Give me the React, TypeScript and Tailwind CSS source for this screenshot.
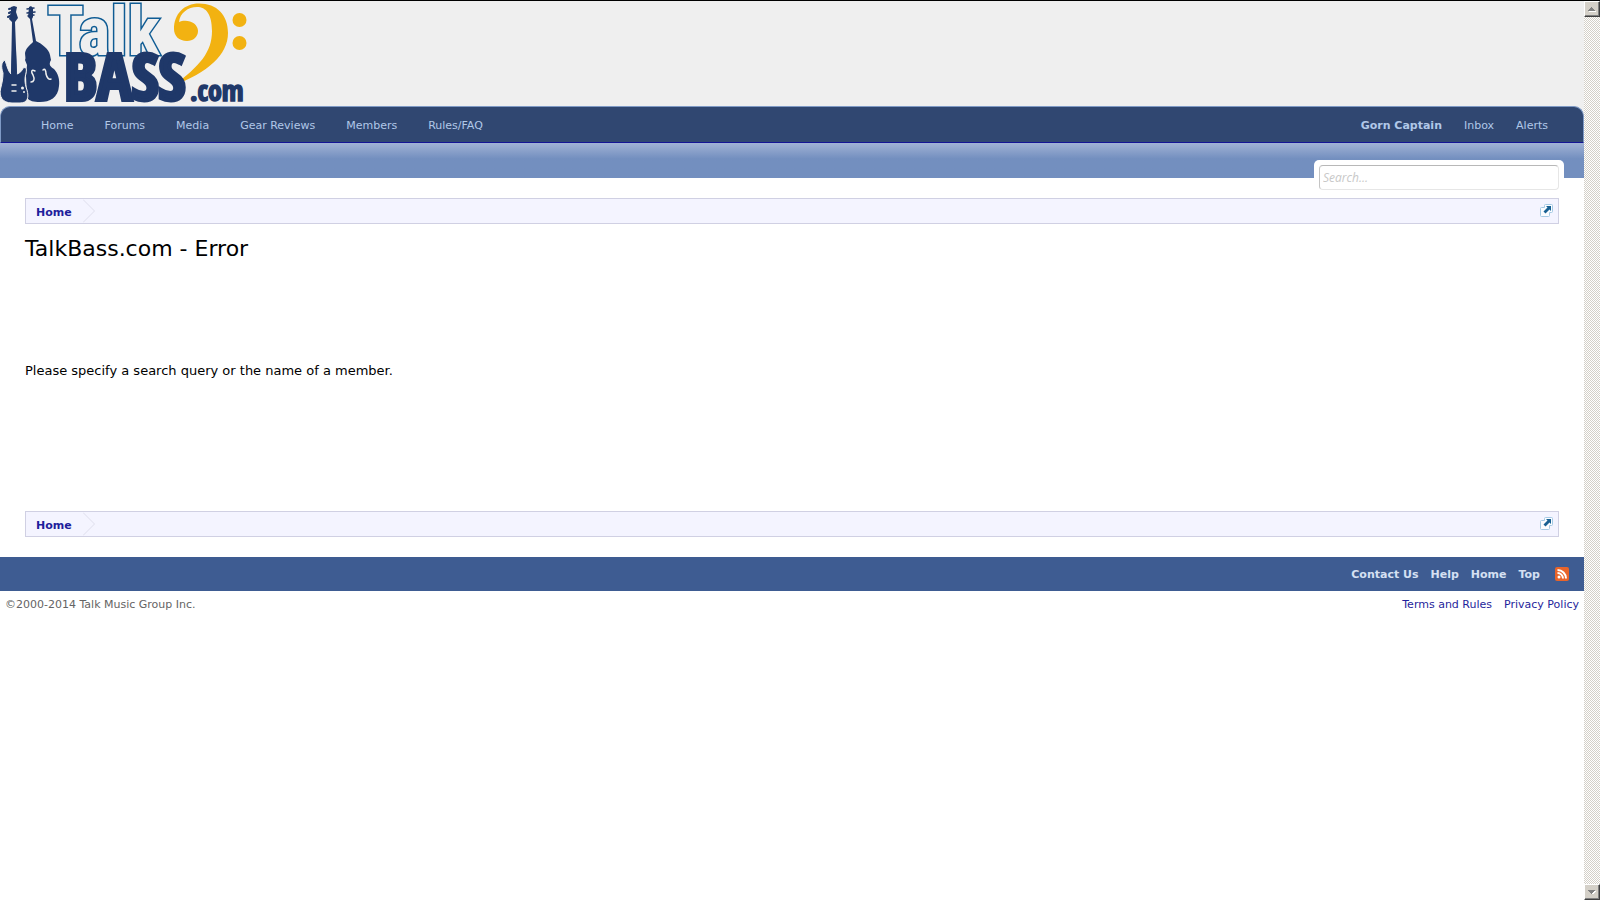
const navLinks = ["Home", "Forums", "Media", "Gear Reviews", "Members", "Rules/FAQ"];
const footerLinks = ["Contact Us", "Help", "Home", "Top"];

function Logo() {
	return (
		<svg
			width="252"
			height="105"
			viewBox="0 0 252 105"
			role="img"
			aria-label="TalkBass.com"
			className="block overflow-visible"
		>
			{/* bass clef */}
			<g fill="#f2b211">
				<path d="M174 28 C174 13 184 2.500 199 2.500 C217 2.500 228 14 228 32 C228 54 208 71 173 85 C200 65 212 51 212 30 C212 13 206 6 197 6 C188 6 180 12 179 21 C182 19.500 187 19.500 190 20.500 C195 22 198 26 198 30 C198 36 193 40 187 40 C179 40 174 35 174 28Z" />
				<circle cx="239.500" cy="19" r="7" />
				<circle cx="239.500" cy="42" r="7" />
			</g>
			<text
				x="47"
				y="54"
				fontSize="68"
				fontWeight="700"
				fill="#efefef"
				stroke="#0f5c94"
				strokeWidth="3"
				paintOrder="stroke"
				className="font-['Roboto_Condensed','Open_Sans_Condensed',sans-serif]"
			>
				Talk
			</text>
			<text
				x="64"
				y="99"
				fontSize="65"
				fontWeight="700"
				fill="#1f3869"
				stroke="#1f3869"
				strokeWidth="4"
				className="font-['Open_Sans_Condensed','Roboto_Condensed',sans-serif]"
			>
				BASS
			</text>
			<text
				x="190"
				y="100"
				fontSize="28"
				fontWeight="700"
				fill="#1f3869"
				stroke="#1f3869"
				strokeWidth="1.500"
				className="font-['Open_Sans_Condensed','Roboto_Condensed',sans-serif]"
			>
				.com
			</text>
			{/* upright bass */}
			<g fill="#1f3869">
				<path d="M29 6 L31 5 L33 7 L33 16 L32 18 L36 40 C42 43 49 48 50 54 L51 59 C48 64 51 66 54 68 C58 72 60 79 59 85 C58 97 50 101 40 101 C33 101 30 100 27 97 L26 75 L27 64 L25 59 C26 57 25 55 25 52 C26 47 30 44 33 41 L30 18 L28 16Z" />
				<path
					d="M27 8 L34 7 M27 12 L35 11 M28 15 L34 14"
					stroke="#1f3869"
					strokeWidth="1.500"
					strokeLinecap="round"
				/>
			</g>
			{/* electric bass */}
			<g fill="#1f3869">
				<path d="M11 6 L14 5 L17 6 L16 11 L18 17 L15 21 L17 73 L11 73 L12 21 L9 18 L11 11Z" />
				<path
					d="M9 8 L13 7 M9 12 L13 10 M8 16 L12 14"
					stroke="#1f3869"
					strokeWidth="2"
					strokeLinecap="round"
				/>
				<path
					d="M5 59 C1 61 1 66 3 72 C3 78 2 82 0.500 88 C-1 95 2 102 12 102 L20 102 C28 102 29 96 27 89 C24 81 25 76 26 72 C27 67 26 66 23 67 C22 70 20 72 17 73 L11 73 C8 70 7 65 5 59Z"
					stroke="#efefef"
					strokeWidth="1"
				/>
				<path d="M12 50 H16 L17 76 H11Z" />
			</g>
			<g fill="none" stroke="#efefef" strokeWidth="1.500" strokeLinecap="round">
				<path d="M12 84 H16 M12 90 H16" />
				<path d="M35 70 C31 68 31 71 33 74 C35 78 34 81 31 81" />
				<path d="M43 69 C45 67 46 70 46 73 C47 77 49 79 51 78" />
			</g>
			<g fill="#efefef">
				<circle cx="22.500" cy="87" r="1.500" />
				<circle cx="24" cy="91" r="1" />
			</g>
		</svg>
	);
}

function OpenQuickNav() {
	return (
		<button type="button" aria-label="Open quick navigation" className="mr-1">
			<svg width="14" height="14" viewBox="0 0 14 14" className="block">
				<path
					d="M5.500 0.500 H11.500 Q12.500 0.500 12.500 1.500 V7.500 Q12.500 8.500 11.500 8.500 H9.500 V11.500 Q9.500 12.500 8.500 12.500 H1.500 Q0.500 12.500 0.500 11.500 V4.500 Q0.500 3.500 1.500 3.500 H4.500 V1.500 Q4.500 0.500 5.500 0.500Z"
					fill="#fafcff"
					stroke="#a5cae4"
				/>
				<path d="M6 2 H11 V7 L9.500 5.500 L5.500 9.500 L3.500 7.500 L7.500 3.500Z" fill="#176093" />
			</svg>
		</button>
	);
}

function Breadcrumb() {
	return (
		<nav
			aria-label="Breadcrumb"
			className="flex h-[26px] items-center justify-between border border-[#d0d0e3] bg-[#f4f4ff]"
		>
			<div className="flex h-full items-center">
				<a href="#home" className="pl-2.5 pt-1 text-[11px] leading-4 font-bold text-[#1f1f9c]">
					Home
				</a>
				<svg width="13" height="24" viewBox="0 0 13 24" className="ml-[11px]" aria-hidden="true">
					<path d="M0 0.500 L11.500 12 L0 23.500" fill="none" stroke="#dedeec" />
				</svg>
			</div>
			<OpenQuickNav />
		</nav>
	);
}

function ScrollRail() {
	const button =
		"flex h-4 w-4 items-center justify-center border border-t-white border-l-white border-r-[#404040] border-b-[#404040] bg-[#d4d0c8] shadow-[inset_-1px_-1px_0_#808080]";

	return (
		<div className="sticky top-0 flex h-screen w-4 shrink-0 flex-col justify-between border-t border-black bg-white bg-[repeating-conic-gradient(#d4d0c8_0_25%,#ffffff_0_50%)] bg-[length:2px_2px]">
			<button type="button" aria-label="Scroll up" className={button}>
				<svg width="8" height="6" viewBox="0 0 8 6" shapeRendering="crispEdges">
					<path d="M1 5 H8 V6 H1Z" fill="#ffffff" />
					<path d="M3 1 H4 V2 H5 V3 H6 V4 H7 V5 H0 V4 H1 V3 H2 V2 H3Z" fill="#808080" />
				</svg>
			</button>
			<button type="button" aria-label="Scroll down" className={button}>
				<svg width="8" height="6" viewBox="0 0 8 6" shapeRendering="crispEdges">
					<path d="M8 2 V3 H7 V4 H6 V5 H4 V4 H5 V3 H6 V2Z" fill="#ffffff" />
					<path d="M0 1 H7 V2 H6 V3 H5 V4 H4 V5 H3 V4 H2 V3 H1 V2 H0Z" fill="#808080" />
				</svg>
			</button>
		</div>
	);
}

export default function App() {
	return (
		<div className="flex min-h-screen bg-white font-[Verdana,'DejaVu_Sans',sans-serif] text-[#000000]">
			<div className="min-w-0 flex-1">
				<header>
					<div className="border-t border-black bg-[#efefef]">
						<a href="#home" className="inline-block align-top">
							<Logo />
						</a>
					</div>
					<div className="bg-[#efefef]">
						<nav
							aria-label="Main"
							className="flex h-[37px] items-center justify-between rounded-t-[10px] border border-b-[#141495] border-[#7f9ac5] bg-[#304771] pt-[3px] pl-10 pr-[35px] text-[11px] text-[#b0c8e8]"
						>
							<div className="flex gap-[31px]">
								{navLinks.map((label) => (
									<a key={label} href="#nav">
										{label}
									</a>
								))}
							</div>
							<div className="flex gap-[22px]">
								<a href="#account" className="font-bold">
									Gorn Captain
								</a>
								<a href="#inbox">Inbox</a>
								<a href="#alerts">Alerts</a>
							</div>
						</nav>
					</div>
					<div className="flex h-[35px] justify-end bg-[#738fbf] bg-linear-to-b from-[#a1b2d5] to-[#738fbf] to-45% pr-5">
						<form
							role="search"
							className="mt-[17px] h-[35px] w-[250px] rounded-t-[5px] bg-white p-[5px]"
						>
							<input
								type="search"
								aria-label="Search"
								placeholder="Search..."
								className="block h-[25px] w-full rounded-[4px] border border-[#e6e6e6] border-t-[#b8b8b8] border-l-[#c4c4c4] bg-white px-[3px] font-['Open_Sans',sans-serif] text-[12px] italic outline-none placeholder:text-[#c8c8c8]"
							/>
						</form>
					</div>
				</header>

				<main className="px-[25px] py-5">
					<Breadcrumb />
					<h1 className="mt-[11px] text-[22px] leading-7">TalkBass.com - Error</h1>
					<p className="mt-[99px] mb-[131px] text-[13px] leading-[18px]">
						Please specify a search query or the name of a member.
					</p>
					<Breadcrumb />
				</main>

				<footer className="text-[11px]">
					<div className="flex h-[34px] items-center justify-end bg-[#3e5c92] pr-[15px] font-bold text-[#d5e0f2]">
						<div className="flex gap-3 pt-[3px]">
							{footerLinks.map((label) => (
								<a key={label} href="#footer">
									{label}
								</a>
							))}
						</div>
						<a href="#rss" aria-label="RSS" className="ml-[15px]">
							<svg width="14" height="14" viewBox="0 0 14 14" className="block">
								<rect width="14" height="14" rx="2" fill="#e8642a" />
								<circle cx="4" cy="10" r="1.500" fill="#ffffff" />
								<path
									d="M2.500 6 A5.500 5.500 0 0 1 8 11.500 M2.500 3 A8.500 8.500 0 0 1 11 11.500"
									fill="none"
									stroke="#ffffff"
									strokeWidth="2"
								/>
							</svg>
						</a>
					</div>
					<div className="flex justify-between px-[5px] py-1.5">
						<p className="text-[#646464]">©2000-2014 Talk Music Group Inc.</p>
						<div className="flex gap-3 text-[#1f1f9c]">
							<a href="#terms">Terms and Rules</a>
							<a href="#privacy">Privacy Policy</a>
						</div>
					</div>
				</footer>
			</div>
			<ScrollRail />
		</div>
	);
}
